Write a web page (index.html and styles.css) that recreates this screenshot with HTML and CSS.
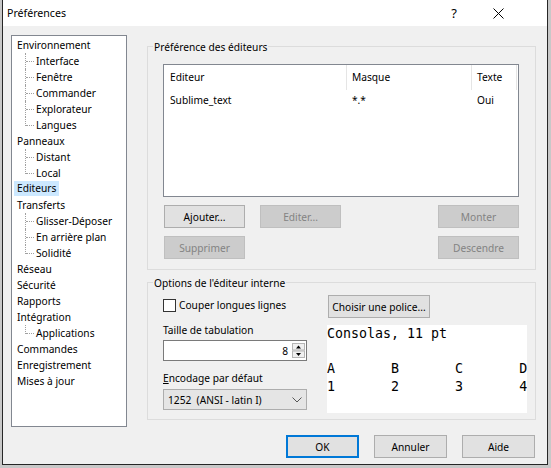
FILE: index.html
```html
<!DOCTYPE html>
<html lang="fr">
<head>
<meta charset="utf-8">
<title>Préférences</title>
<link rel="stylesheet" href="styles.css">
</head>
<body>
<div class="window">
  <div class="titlebar">
    <span class="title">Préférences</span>
    <span class="help">?</span>
    <span class="close"><svg width="11" height="11" viewBox="0 0 11 11"><path d="M0.5 0.5 L10.5 10.5 M10.5 0.5 L0.5 10.5" stroke="#000" stroke-width="1" fill="none"/></svg></span>
  </div>
  <div class="content">
    <ul class="tree">
      <li>Environnement
        <ul class="sub"><li>Interface</li><li>Fenêtre</li><li>Commander</li><li>Explorateur</li><li>Langues</li></ul>
      </li>
      <li>Panneaux
        <ul class="sub"><li>Distant</li><li>Local</li></ul>
      </li>
      <li><span class="sel">Editeurs</span></li>
      <li>Transferts
        <ul class="sub"><li>Glisser-Déposer</li><li>En arrière plan</li><li>Solidité</li></ul>
      </li>
      <li>Réseau</li>
      <li>Sécurité</li>
      <li>Rapports</li>
      <li>Intégration
        <ul class="sub"><li>Applications</li></ul>
      </li>
      <li>Commandes</li>
      <li>Enregistrement</li>
      <li>Mises à jour</li>
    </ul>
    <div class="right">
      <div class="group g1">
        <span class="legend">Préférence des éditeurs</span>
        <div class="listview">
          <div class="lv-head"><span>Editeur</span><span>Masque</span><span>Texte</span></div>
          <div class="lv-row"><span>Sublime_text</span><span>*.*</span><span>Oui</span></div>
        </div>
        <div class="btns">
          <button class="btn">Ajouter...</button>
          <button class="btn dis">Editer...</button>
          <button class="btn dis c4">Monter</button>
          <button class="btn dis">Supprimer</button>
          <button class="btn dis c4">Descendre</button>
        </div>
      </div>
      <div class="group g2">
        <span class="legend">Options de l'éditeur interne</span>
        <div class="opt-left">
          <label class="check-row"><span class="checkbox"></span>Couper longues lignes</label>
          <div class="lbl lbl-tab">Taille de tabulation</div>
          <div class="spin">
            <span>8</span>
            <svg width="13" height="15" viewBox="0 0 13 15"><rect x="0.5" y="0.5" width="12" height="6.5" fill="#f0f0f0" stroke="#b5b5b5"/><rect x="0.5" y="8" width="12" height="6.5" fill="#f0f0f0" stroke="#b5b5b5"/><path d="M4 5.5 L9 5.5 L6.5 2.5 Z" fill="#000"/><path d="M4 10 L9 10 L6.5 13 Z" fill="#000"/></svg>
          </div>
          <div class="lbl lbl-enc"><span class="u">E</span>ncodage par défaut</div>
          <div class="combo">
            <span class="combo-text">1252  (ANSI - latin I)</span>
            <svg class="chev" width="10" height="6" viewBox="0 0 10 6"><path d="M0.5 0.5 L5 5 L9.5 0.5" stroke="#555" stroke-width="1" fill="none"/></svg>
          </div>
        </div>
        <div class="opt-right">
          <button class="btn font-btn">Choisir une police...</button>
          <div class="preview">Consolas, 11 pt

A       B       C       D
1       2       3       4</div>
        </div>
      </div>
    </div>
  </div>
  <div class="footer">
    <button class="btn fbtn ok">OK</button>
    <button class="btn fbtn">Annuler</button>
    <button class="btn fbtn">Aide</button>
  </div>
</div>
</body>
</html>
```

FILE: styles.css
```css
* { box-sizing: border-box; }
html, body { margin: 0; padding: 0; }
body {
  background: #c8c8c8;
  font-family: "Noto Sans", sans-serif;
  font-size: 10.2px;
  color: #000;
  width: 551px;
  height: 468px;
  overflow: hidden;
}
.window {
  margin-left: 2px;
  width: 546px;
  height: 465px;
  border: 1px solid #262626;
  border-top: 0;
  background: #f0f0f0;
  display: flex;
  flex-direction: column;
}
.titlebar {
  height: 26px;
  flex: none;
  background: #fff;
  display: flex;
  align-items: center;
  padding-left: 4px;
}
.title { flex: 1; font-size: 10.6px; }
.help { width: 20px; text-align: center; font-size: 13px; margin-right: 24px; }
.close {
  width: 20px; height: 20px;
  display: flex; align-items: center; justify-content: center;
  margin-right: 39px;
}
.content { display: flex; padding: 9px 0 0 8px; }
.tree {
  list-style: none;
  margin: 0;
  width: 116px;
  height: 392px;
  border: 1px solid #828790;
  background: #fff;
  padding: 1px 0 0 5px;
  line-height: 16px;
  white-space: nowrap;
}
.sub { list-style: none; margin: 0; padding-left: 19px; }
.sub li { position: relative; }
.sub li::before {
  content: "";
  position: absolute;
  left: -10px; top: 8px;
  width: 8px;
  border-top: 1px dotted #a0a0a0;
}
.sub li::after {
  content: "";
  position: absolute;
  left: -11px; top: 0;
  height: 16px;
  border-left: 1px dotted #a0a0a0;
}
.sub li:last-child::after { height: 9px; }
.sel {
  display: inline-block;
  background: #cce8ff;
  margin-left: -3px;
  padding: 0 3px;
  height: 15px;
  line-height: 15px;
  vertical-align: top;
}
.right {
  margin-left: 20px;
  padding-top: 11px;
  width: 389px;
  display: flex;
  flex-direction: column;
  gap: 12px;
}
.group { position: relative; border: 1px solid #dcdcdc; }
.legend {
  position: absolute;
  top: -8px; left: 5px;
  padding: 0 1px;
  line-height: 16px;
  background: #f0f0f0;
}
.g1 { height: 224px; padding: 17px 16px 0 15px; }
.listview {
  height: 133px;
  border: 1px solid #828790;
  background: #fff;
}
.lv-head, .lv-row {
  display: grid;
  grid-template-columns: 183px 125px 45px;
}
.lv-head { height: 25px; }
.lv-head span { border-right: 1px solid #e5e5e5; line-height: 25px; padding-left: 5px; }
.lv-row span { line-height: 20px; padding-left: 5px; }
.lv-head span:first-child, .lv-row span:first-child { padding-left: 6px; }
.btns {
  display: grid;
  grid-template-columns: 81px 81px 1fr 81px;
  gap: 8px 15px;
  margin: 8px 0 0 1px;
}
.c4 { grid-column: 4; }
.btn {
  height: 23px;
  border: 1px solid #adadad;
  background: #e1e1e1;
  font: inherit;
  color: #000;
  padding: 0;
  display: flex;
  align-items: center;
  justify-content: center;
}
.btn.dis { background: #cccccc; border-color: #bfbfbf; color: #838383; }
.g2 { height: 138px; padding: 12px 0 0 15px; display: flex; gap: 20px; }
.opt-left { width: 144px; display: flex; flex-direction: column; }
.check-row { height: 20px; display: flex; align-items: center; gap: 3px; }
.checkbox { width: 13px; height: 13px; border: 1px solid #333; background: #fff; }
.lbl { line-height: 16px; }
.lbl-tab { margin-top: 7px; }
.lbl-enc { margin-top: 9px; }
.u { text-decoration: underline; }
.spin {
  margin-top: 2px;
  height: 21px;
  border: 1px solid #7a7a7a;
  background: #fff;
  display: flex;
  align-items: center;
  justify-content: flex-end;
  gap: 4px;
  padding-right: 1px;
}
.combo {
  margin-top: 3px;
  height: 21px;
  border: 1px solid #adadad;
  background: #e5e5e5;
  display: flex;
  align-items: center;
  padding-left: 4px;
}
.combo-text { white-space: pre; }
.chev { margin-left: auto; margin-right: 4px; }
.opt-right { width: 200px; display: flex; flex-direction: column; }
.font-btn { width: 102px; margin-left: 1px; }
.preview {
  margin-top: 7px;
  width: 200px;
  height: 88px;
  background: #fff;
  font-family: "DejaVu Sans Mono", monospace;
  font-size: 13.3px;
  line-height: 17.5px;
  white-space: pre;
  overflow: hidden;
}
.footer {
  display: flex;
  justify-content: flex-end;
  gap: 15px;
  padding: 8px 12px 0 0;
}
.fbtn { width: 73px; }
.ok { border: 2px solid #0078d7; }
```
